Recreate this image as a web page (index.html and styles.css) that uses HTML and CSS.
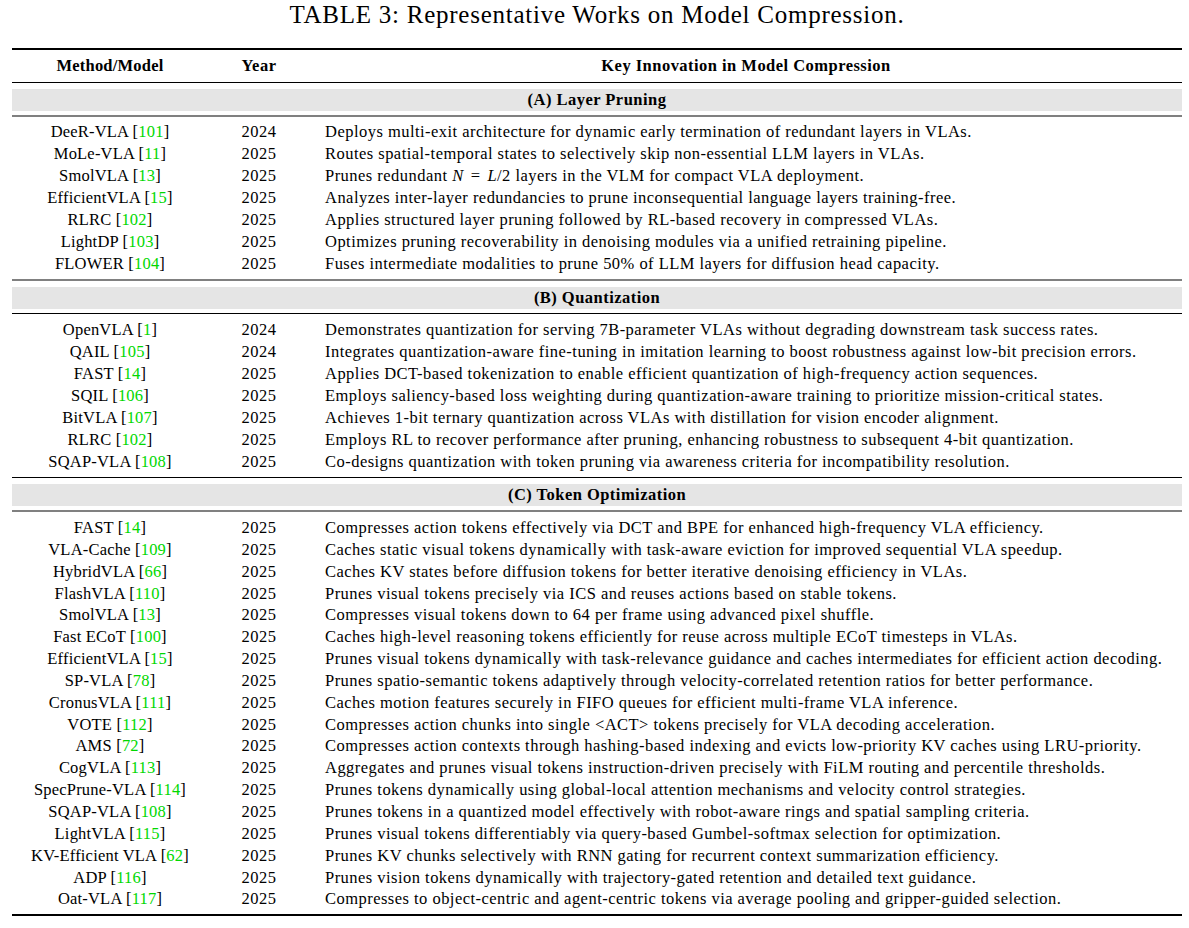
FILE: index.html
```html
<!DOCTYPE html>
<html lang="en">
<head>
<meta charset="utf-8">
<title>TABLE 3: Representative Works on Model Compression.</title>
<link rel="stylesheet" href="styles.css">
</head>
<body>
<div class="page">
  <div class="caption">TABLE 3: Representative Works on Model Compression.</div>
  <div class="table">
    <div class="rule rule-thick"></div>
    <div class="row head">
      <div class="c1">Method/Model</div>
      <div class="c2">Year</div>
      <div class="c3">Key Innovation in Model Compression</div>
    </div>
    <div class="rule rule-thin"></div>

    <div class="band gap-top6">(A) Layer Pruning</div>
    <div class="rule rule-gray gap-top4"></div>
    <div class="rows">
      <div class="row"><div class="c1">DeeR-VLA [<span class="cite">101</span>]</div><div class="c2">2024</div><div class="c3">Deploys multi-exit architecture for dynamic early termination of redundant layers in VLAs.</div></div>
      <div class="row"><div class="c1">MoLe-VLA [<span class="cite">11</span>]</div><div class="c2">2025</div><div class="c3">Routes spatial-temporal states to selectively skip non-essential LLM layers in VLAs.</div></div>
      <div class="row"><div class="c1">SmolVLA [<span class="cite">13</span>]</div><div class="c2">2025</div><div class="c3">Prunes redundant <span class="math"><i>N</i><span class="op">=</span><i>L</i>/2</span> layers in the VLM for compact VLA deployment.</div></div>
      <div class="row"><div class="c1">EfficientVLA [<span class="cite">15</span>]</div><div class="c2">2025</div><div class="c3">Analyzes inter-layer redundancies to prune inconsequential language layers training-free.</div></div>
      <div class="row"><div class="c1">RLRC [<span class="cite">102</span>]</div><div class="c2">2025</div><div class="c3">Applies structured layer pruning followed by RL-based recovery in compressed VLAs.</div></div>
      <div class="row"><div class="c1">LightDP [<span class="cite">103</span>]</div><div class="c2">2025</div><div class="c3">Optimizes pruning recoverability in denoising modules via a unified retraining pipeline.</div></div>
      <div class="row"><div class="c1">FLOWER [<span class="cite">104</span>]</div><div class="c2">2025</div><div class="c3">Fuses intermediate modalities to prune 50% of LLM layers for diffusion head capacity.</div></div>
    </div>

    <div class="rule rule-gray gap-top4"></div>
    <div class="band gap-top6">(B) Quantization</div>
    <div class="rule rule-thin gap-top4"></div>
    <div class="rows rows-b">
      <div class="row"><div class="c1">OpenVLA [<span class="cite">1</span>]</div><div class="c2">2024</div><div class="c3">Demonstrates quantization for serving 7B-parameter VLAs without degrading downstream task success rates.</div></div>
      <div class="row"><div class="c1">QAIL [<span class="cite">105</span>]</div><div class="c2">2024</div><div class="c3">Integrates quantization-aware fine-tuning in imitation learning to boost robustness against low-bit precision errors.</div></div>
      <div class="row"><div class="c1">FAST [<span class="cite">14</span>]</div><div class="c2">2025</div><div class="c3">Applies DCT-based tokenization to enable efficient quantization of high-frequency action sequences.</div></div>
      <div class="row"><div class="c1">SQIL [<span class="cite">106</span>]</div><div class="c2">2025</div><div class="c3">Employs saliency-based loss weighting during quantization-aware training to prioritize mission-critical states.</div></div>
      <div class="row"><div class="c1">BitVLA [<span class="cite">107</span>]</div><div class="c2">2025</div><div class="c3">Achieves 1-bit ternary quantization across VLAs with distillation for vision encoder alignment.</div></div>
      <div class="row"><div class="c1">RLRC [<span class="cite">102</span>]</div><div class="c2">2025</div><div class="c3">Employs RL to recover performance after pruning, enhancing robustness to subsequent 4-bit quantization.</div></div>
      <div class="row"><div class="c1">SQAP-VLA [<span class="cite">108</span>]</div><div class="c2">2025</div><div class="c3">Co-designs quantization with token pruning via awareness criteria for incompatibility resolution.</div></div>
    </div>

    <div class="rule rule-thin gap-top4"></div>
    <div class="band gap-top6">(C) Token Optimization</div>
    <div class="rule rule-gray gap-top4"></div>
    <div class="rows rows-c">
      <div class="row"><div class="c1">FAST [<span class="cite">14</span>]</div><div class="c2">2025</div><div class="c3">Compresses action tokens effectively via DCT and BPE for enhanced high-frequency VLA efficiency.</div></div>
      <div class="row"><div class="c1">VLA-Cache [<span class="cite">109</span>]</div><div class="c2">2025</div><div class="c3">Caches static visual tokens dynamically with task-aware eviction for improved sequential VLA speedup.</div></div>
      <div class="row"><div class="c1">HybridVLA [<span class="cite">66</span>]</div><div class="c2">2025</div><div class="c3">Caches KV states before diffusion tokens for better iterative denoising efficiency in VLAs.</div></div>
      <div class="row"><div class="c1">FlashVLA [<span class="cite">110</span>]</div><div class="c2">2025</div><div class="c3">Prunes visual tokens precisely via ICS and reuses actions based on stable tokens.</div></div>
      <div class="row"><div class="c1">SmolVLA [<span class="cite">13</span>]</div><div class="c2">2025</div><div class="c3">Compresses visual tokens down to 64 per frame using advanced pixel shuffle.</div></div>
      <div class="row"><div class="c1">Fast ECoT [<span class="cite">100</span>]</div><div class="c2">2025</div><div class="c3">Caches high-level reasoning tokens efficiently for reuse across multiple ECoT timesteps in VLAs.</div></div>
      <div class="row"><div class="c1">EfficientVLA [<span class="cite">15</span>]</div><div class="c2">2025</div><div class="c3">Prunes visual tokens dynamically with task-relevance guidance and caches intermediates for efficient action decoding.</div></div>
      <div class="row"><div class="c1">SP-VLA [<span class="cite">78</span>]</div><div class="c2">2025</div><div class="c3">Prunes spatio-semantic tokens adaptively through velocity-correlated retention ratios for better performance.</div></div>
      <div class="row"><div class="c1">CronusVLA [<span class="cite">111</span>]</div><div class="c2">2025</div><div class="c3">Caches motion features securely in FIFO queues for efficient multi-frame VLA inference.</div></div>
      <div class="row"><div class="c1">VOTE [<span class="cite">112</span>]</div><div class="c2">2025</div><div class="c3">Compresses action chunks into single &lt;ACT&gt; tokens precisely for VLA decoding acceleration.</div></div>
      <div class="row"><div class="c1">AMS [<span class="cite">72</span>]</div><div class="c2">2025</div><div class="c3">Compresses action contexts through hashing-based indexing and evicts low-priority KV caches using LRU-priority.</div></div>
      <div class="row"><div class="c1">CogVLA [<span class="cite">113</span>]</div><div class="c2">2025</div><div class="c3">Aggregates and prunes visual tokens instruction-driven precisely with FiLM routing and percentile thresholds.</div></div>
      <div class="row"><div class="c1">SpecPrune-VLA [<span class="cite">114</span>]</div><div class="c2">2025</div><div class="c3">Prunes tokens dynamically using global-local attention mechanisms and velocity control strategies.</div></div>
      <div class="row"><div class="c1">SQAP-VLA [<span class="cite">108</span>]</div><div class="c2">2025</div><div class="c3">Prunes tokens in a quantized model effectively with robot-aware rings and spatial sampling criteria.</div></div>
      <div class="row"><div class="c1">LightVLA [<span class="cite">115</span>]</div><div class="c2">2025</div><div class="c3">Prunes visual tokens differentiably via query-based Gumbel-softmax selection for optimization.</div></div>
      <div class="row"><div class="c1">KV-Efficient VLA [<span class="cite">62</span>]</div><div class="c2">2025</div><div class="c3">Prunes KV chunks selectively with RNN gating for recurrent context summarization efficiency.</div></div>
      <div class="row"><div class="c1">ADP [<span class="cite">116</span>]</div><div class="c2">2025</div><div class="c3">Prunes vision tokens dynamically with trajectory-gated retention and detailed text guidance.</div></div>
      <div class="row"><div class="c1">Oat-VLA [<span class="cite">117</span>]</div><div class="c2">2025</div><div class="c3">Compresses to object-centric and agent-centric tokens via average pooling and gripper-guided selection.</div></div>
    </div>
    <div class="rule rule-thick gap-top4"></div>
  </div>
</div>
</body>
</html>
```

FILE: styles.css
```css
html, body {
  margin: 0;
  padding: 0;
  background: #ffffff;
}

body {
  font-family: "Liberation Serif", "Times New Roman", serif;
  color: #000000;
}

.page {
  width: 1189px;
  padding: 0 7px 0 12px;
  box-sizing: border-box;
}

.caption {
  height: 30px;
  line-height: 30px;
  text-align: center;
  font-size: 25px;
  letter-spacing: 0.75px;
  margin-bottom: 18px;
}

.table {
  width: 1170px;
  font-size: 16.5px;
  letter-spacing: 0.47px;
}

.rule {
  width: 100%;
}
.rule-thick {
  height: 2px;
  background: #000;
}
.rule-thin {
  height: 1px;
  background: #000;
}
.rule-gray {
  height: 2px;
  background: #808080;
}

.gap-top4 { margin-top: 4px; }
.gap-top6 { margin-top: 6px; }

.row {
  display: grid;
  grid-template-columns: 196px 102px 1fr;
  height: 22px;
  line-height: 22px;
  white-space: nowrap;
}

.row.head {
  height: 32px;
  line-height: 32px;
  font-weight: bold;
}

.c1, .c2 {
  text-align: center;
}

.c1 {
  letter-spacing: 0.2px;
}

.c3 {
  text-align: left;
  padding-left: 15px;
}

.head .c3 {
  text-align: center;
  padding-left: 0;
}

.band {
  height: 22px;
  line-height: 22px;
  background: #e5e5e5;
  text-align: center;
  font-weight: bold;
}

.rows {
  padding-top: 4px;
}

.rows-b {
  padding-top: 5px;
}

.rows-c {
  padding-top: 5px;
}

.rows-c .row {
  height: 21.85px;
  line-height: 21.85px;
}

.cite {
  color: #00d800;
}

.math i {
  font-style: italic;
}

.op {
  padding: 0 7px;
}
```
